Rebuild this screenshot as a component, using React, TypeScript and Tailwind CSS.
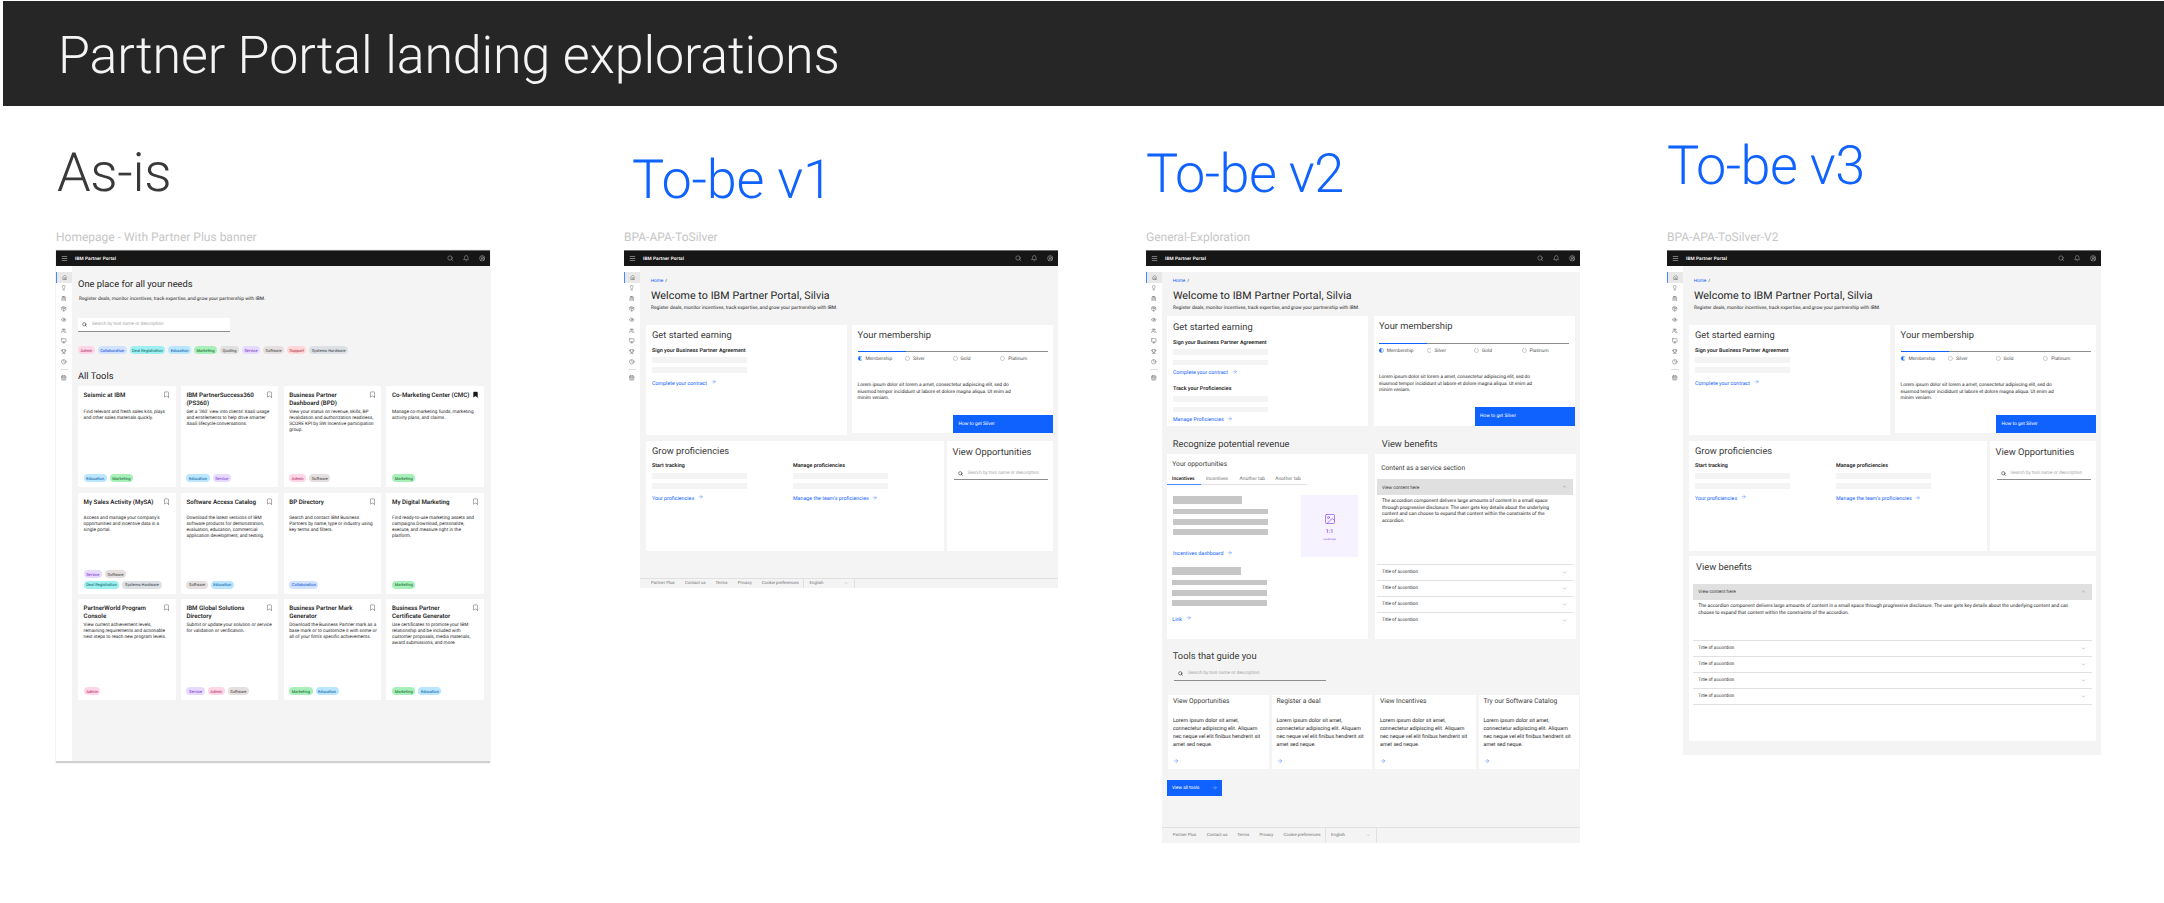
import type { ReactNode } from "react";
import {
  ArrowRight,
  Bell,
  Bookmark,
  CalendarDays,
  ChevronDown,
  ChevronUp,
  CircleUserRound,
  ClipboardList,
  Clock,
  Eye,
  Home,
  Image,
  Lightbulb,
  Menu,
  Monitor,
  Package,
  Search,
  Trophy,
  Users,
} from "lucide-react";

const tagStyles: Record<string, string> = {
  Admin: "bg-[#ffd6e8] text-[#9f1853]",
  Collaboration: "bg-[#d0e2ff] text-[#0043ce]",
  "Deal Registration": "bg-[#9ef0f0] text-[#005d5d]",
  Education: "bg-[#bae6ff] text-[#00539a]",
  Marketing: "bg-[#a7f0ba] text-[#0e6027]",
  Quoting: "bg-[#e0e0e0] text-[#393939]",
  Service: "bg-[#e8daff] text-[#6929c4]",
  Software: "bg-[#e5e0df] text-[#3c3838]",
  Support: "bg-[#ffd7d9] text-[#a2191f]",
  "Systems Hardware": "bg-[#dde1e6] text-[#343a3f]",
};

const tools = [
  { title: "Seismic at IBM", desc: "Find relevant and fresh sales kits, plays\nand other sales materials quickly.", tags: ["Education", "Marketing"] },
  { title: "IBM PartnerSuccess360\n(PS360)", desc: "Get a '360' view into clients' XaaS usage\nand entitlements to help drive smarter\nXaaS lifecycle conversations.", tags: ["Education", "Service"] },
  { title: "Business Partner\nDashboard (BPD)", desc: "View your status on revenue, skills, BP\nrevalidation and authorization readiness,\nSCORE KPI by SW Incentive participation\ngroup.", tags: ["Admin", "Software"] },
  { title: "Co-Marketing Center (CMC)", desc: "Manage co-marketing funds, marketing\nactivity plans, and claims.", tags: ["Marketing"], saved: true },
  { title: "My Sales Activity (MySA)", desc: "Access and manage your company's\nopportunities and incentive data in a\nsingle portal.", tags: ["Service", "Software", "Deal Registration", "Systems Hardware"] },
  { title: "Software Access Catalog", desc: "Download the latest versions of IBM\nsoftware products for demonstration,\nevaluation, education, commercial\napplication development, and testing.", tags: ["Software", "Education"] },
  { title: "BP Directory", desc: "Search and contact IBM Business\nPartners by name, type or industry using\nkey terms and filters.", tags: ["Collaboration"] },
  { title: "My Digital Marketing", desc: "Find ready-to-use marketing assets and\ncampaigns.Download, personalize,\nexecute, and measure right in the\nplatform.", tags: ["Marketing"] },
  { title: "PartnerWorld Program\nConsole", desc: "View current achievement levels,\nremaining requirements and actionable\nnext steps to reach new program levels.", tags: ["Admin"] },
  { title: "IBM Global Solutions\nDirectory", desc: "Submit or update your solution or service\nfor validation or verification.", tags: ["Service", "Admin", "Software"] },
  { title: "Business Partner Mark\nGenerator", desc: "Download the Business Partner mark as a\nbase mark or to customize it with some or\nall of your firm's specific achievements.", tags: ["Marketing", "Education"] },
  { title: "Business Partner\nCertificate Generator", desc: "Use certificates to promote your IBM\nrelationship and be included with\ncustomer proposals, media materials,\naward submissions, and more.", tags: ["Marketing", "Education"] },
];

const sideIcons = [Home, Lightbulb, ClipboardList, Package, Eye, Users, Monitor, Trophy, Clock];

function Tag({ name }: { name: string }) {
  return (
    <span className={`flex h-[8px] items-center rounded-full px-[2.6px] pt-[1.5px] text-[4.05px] whitespace-nowrap ${tagStyles[name]}`}>
      {name}
    </span>
  );
}

function TopBar() {
  return (
    <div className="flex h-[16px] items-center bg-[#161616] border-t border-[#6f6f6f] text-white">
      <div className="flex w-[16px] justify-center">
        <Menu size={7} strokeWidth={1.5} />
      </div>
      <span className="ml-[3px] pt-[2.8px] text-[4.7px] font-semibold tracking-[0.1px]">IBM Partner Portal</span>
      <div className="ml-auto flex">
        <div className="flex w-[16px] justify-center"><Search size={6.5} strokeWidth={1.2} /></div>
        <div className="flex w-[16px] justify-center"><Bell size={6.5} strokeWidth={1.2} /></div>
        <div className="flex w-[16px] justify-center"><CircleUserRound size={6.5} strokeWidth={1.2} /></div>
      </div>
    </div>
  );
}

function SideNav() {
  return (
    <div className="w-[16px] shrink-0 pt-[6px] bg-white text-[#393939]">
      {sideIcons.map((Icon, i) => (
        <div
          key={i}
          className={`flex h-[10.6px] items-center justify-center ${i === 0 ? "bg-[#e8e8e8] border-l border-[#4589ff]" : ""}`}
        >
          <Icon size={5.5} strokeWidth={1.6} />
        </div>
      ))}
      <div className="mx-[4px] mt-[1.5px] mb-[3px] h-px bg-[#e0e0e0]" />
      <div className="flex h-[10.6px] items-center justify-center">
        <CalendarDays size={5.5} strokeWidth={1.6} />
      </div>
    </div>
  );
}

function Frame({ children, gap = false }: { children: ReactNode; gap?: boolean }) {
  return (
    <div className="flex h-full flex-col">
      <TopBar />
      <div className="flex flex-1">
        <SideNav />
        <div className={`flex flex-1 flex-col bg-[#f4f4f4] ${gap ? "mt-[5.6px]" : ""}`}>{children}</div>
      </div>
    </div>
  );
}

function PageHead({ title, subTop }: { title: string; subTop: string }) {
  return (
    <div className={subTop}>
      <div className="flex h-[6px] items-center gap-[2px] pl-[10.7px] text-[4.7px] leading-[6px]">
        <span className="pt-[3px] text-[#0f62fe]">Home</span>
        <span className="pt-[3px] text-[#161616]">/</span>
      </div>
      <h2 className="mt-[5.5px] pl-[11px] text-[10.7px] leading-[14px] tracking-[0.05px] text-[#262626]">{title}</h2>
      <p className="mt-[3.1px] pl-[11px] text-[4.85px] leading-[6px] text-[#262626]">
        Register deals, monitor incentives, track expertise, and grow your partnership with IBM.
      </p>
    </div>
  );
}

function TextLink({ label, className = "" }: { label: string; className?: string }) {
  return (
    <div className={`flex h-[6px] items-center gap-[3.5px] text-[5.3px] leading-[6px] text-[#0f62fe] ${className}`}>
      <span className="pt-[3.5px]">{label}</span>
      <ArrowRight size={5.5} strokeWidth={1.5} />
    </div>
  );
}

function GreyBars() {
  return (
    <div className="flex w-[95px] flex-col gap-[4.6px]">
      <div className="h-[5.6px] bg-[#f4f4f4]" />
      <div className="h-[5.6px] bg-[#f4f4f4]" />
    </div>
  );
}

function Label({ children }: { children: ReactNode }) {
  return <div className="h-[6px] text-[5.4px] leading-[6px] font-semibold whitespace-nowrap text-[#262626]">{children}</div>;
}

function CardTitle({ children }: { children: ReactNode }) {
  return <h3 className="text-[9.35px] leading-[10px] whitespace-nowrap text-[#393939]">{children}</h3>;
}

function GetStarted({ track = false }: { track?: boolean }) {
  return (
    <div className={`h-[110px] w-[201px] bg-white pl-[6px] ${track ? "pt-[7px]" : "pt-[6.5px]"}`}>
      <CardTitle>Get started earning</CardTitle>
      <div className={track ? "mt-[7px]" : "mt-[6.5px]"}><Label>Sign your Business Partner Agreement</Label></div>
      <div className="mt-[3.3px]"><GreyBars /></div>
      <TextLink label="Complete your contract" className={track ? "mt-[3.5px]" : "mt-[5.9px]"} />
      {track && (
        <>
          <div className="mt-[11.7px]"><Label>Track your Proficiencies</Label></div>
          <div className="mt-[4px]"><GreyBars /></div>
          <TextLink label="Manage Proficiencies" className="mt-[3.2px]" />
        </>
      )}
    </div>
  );
}

function StepDot({ active }: { active: boolean }) {
  return (
    <svg viewBox="0 0 10 10" className="h-[4.8px] w-[4.8px] shrink-0">
      <circle cx="5" cy="5" r="4.4" fill="#fff" stroke={active ? "#0f62fe" : "#8d8d8d"} strokeWidth="0.9" />
      {active && <path d="M5 .6a4.4 4.4 0 0 0 0 8.8z" fill="#0f62fe" />}
    </svg>
  );
}

function Membership({ tall = false }: { tall?: boolean }) {
  return (
    <div className={`relative w-[201px] bg-white pt-[6px] ${tall ? "h-[110px]" : "h-[108px]"}`}>
      <div className="pl-[5.3px]"><CardTitle>Your membership</CardTitle></div>
      <div className={`mx-[5.3px] flex h-px bg-[#8d8d8d] ${tall ? "mt-[11px]" : "mt-[10px]"}`}>
        <div className="w-[48px] bg-[#0f62fe]" />
      </div>
      <div className="mx-[5.3px] mt-[2.7px] grid grid-cols-4 text-[4.8px] leading-[6px] text-[#525252]">
        {["Membership", "Silver", "Gold", "Platinum"].map((s, i) => (
          <div key={s} className="flex items-center gap-[3px]">
            <StepDot active={i === 0} />
            <span className="pt-[2.2px]">{s}</span>
          </div>
        ))}
      </div>
      <p className="mx-[5.3px] mt-[20px] text-[4.82px] leading-[6.67px] text-[#262626] whitespace-pre">
        {"Lorem ipsum dolor sit lorem a amet, consectetur adipiscing elit, sed do\neiusmod tempor incididunt ut labore et dolore magna aliqua. Ut enim ad\nminim veniam."}
      </p>
      <div className={`absolute right-0 bottom-0 w-[100px] bg-[#0f62fe] pl-[5.3px] pt-[6.7px] text-[4.8px] leading-[6px] text-white ${tall ? "h-[19px]" : "h-[18px]"}`}>
        How to get Silver
      </div>
    </div>
  );
}

function Proficiencies() {
  return (
    <div className="h-[110.5px] w-[298px] bg-white pl-[6px] pt-[6.5px]">
      <CardTitle>Grow proficiencies</CardTitle>
      <div className="mt-[6px] flex gap-[46px]">
        <div>
          <Label>Start tracking</Label>
          <div className="mt-[4px]"><GreyBars /></div>
          <TextLink label="Your proficiencies" className="mt-[5.2px]" />
        </div>
        <div>
          <Label>Manage proficiencies</Label>
          <div className="mt-[4px]"><GreyBars /></div>
          <TextLink label="Manage the team's proficiencies" className="mt-[5.7px]" />
        </div>
      </div>
    </div>
  );
}

function SearchField({ className }: { className: string }) {
  return (
    <div className={`flex items-center border-b border-[#8d8d8d] pl-[4px] text-[4.65px] text-[#a8a8a8] ${className}`}>
      <Search size={5} strokeWidth={2.4} className="mr-[5px] text-[#161616]" />
      <span className="pt-[2.4px] whitespace-nowrap">Search by tool name or description</span>
    </div>
  );
}

function ViewOpportunities() {
  return (
    <div className="h-[110.5px] w-[106px] bg-white pl-[5.5px] pr-[5.5px] pt-[7.5px]">
      <CardTitle>View Opportunities</CardTitle>
      <SearchField className="mt-[9px] ml-[1px] h-[13px]" />
    </div>
  );
}

function AccordionRows({ edge, last = true }: { edge: string; last?: boolean }) {
  return (
    <div className={edge}>
      {[0, 1, 2, 3].map((i) => (
        <div key={i} className="flex h-[16px] items-center justify-between border-t border-[#e0e0e0] pl-[5px] pr-[6px] text-[4.65px] text-[#393939]">
          <span className="pt-[2.2px]">Title of accordion</span>
          <ChevronDown size={5} strokeWidth={1.2} />
        </div>
      ))}
      {last && <div className="h-px bg-[#e0e0e0]" />}
    </div>
  );
}

function AccordionHead({ edge }: { edge: string }) {
  return (
    <div className={`flex h-[16px] items-center justify-between bg-[#e0e0e0] pl-[5px] pr-[6px] text-[4.7px] text-[#393939] ${edge}`}>
      <span className="pt-[2.2px]">View content here</span>
      <ChevronUp size={5} strokeWidth={1.2} />
    </div>
  );
}

function Footer({ pad }: { pad: string }) {
  const links = [
    ["Partner Plus", "w-[34px]"],
    ["Contact us", "w-[30.5px]"],
    ["Terms", "w-[22.3px]"],
    ["Privacy", "w-[24px]"],
    ["Cookie preferences", "w-[41.6px]"],
  ];
  return (
    <div className={`mt-auto flex border-t border-[#e0e0e0] text-[4.3px] text-[#6f6f6f] ${pad}`}>
      {links.map(([label, w]) => (
        <div key={label} className={`flex items-center whitespace-nowrap pt-[2px] ${w}`}>{label}</div>
      ))}
      <div className="flex w-[52px] items-center justify-between border-x border-[#e0e0e0] pl-[5px] pr-[6px]">
        <span className="pt-[2px]">English</span>
        <ChevronDown size={4.5} strokeWidth={1.2} />
      </div>
    </div>
  );
}

function ToolCard({ title, desc, tags, saved }: { title: string; desc: string; tags: string[]; saved?: boolean }) {
  return (
    <div className="flex h-[101px] flex-col bg-white px-[5.6px] pt-[6px] pb-[5.3px]">
      <div className="flex h-[17.5px] items-start justify-between">
        <h4 className="text-[6.2px] leading-[7.3px] font-semibold text-[#262626] whitespace-pre">{title}</h4>
        <Bookmark size={7} strokeWidth={1.2} className="-mt-[1px] -mr-[0.4px] shrink-0 text-[#161616]" fill={saved ? "#161616" : "none"} />
      </div>
      <p className="text-[4.7px] leading-[6px] text-[#262626] whitespace-pre">{desc}</p>
      <div className="mt-auto flex max-w-[80px] flex-wrap gap-x-[3px] gap-y-[2.6px]">
        {tags.map((t) => (
          <Tag key={t} name={t} />
        ))}
      </div>
    </div>
  );
}

function AsIs() {
  return (
    <div className="absolute left-[56px] top-[250px] h-[513px] w-[434px] border-b-2 border-[#d0d0d0] shadow-[0_0_0_0.5px_#e8e8e8]">
      <Frame>
        <div className="px-[6px] pt-[13px]">
          <h2 className="text-[9.3px] leading-[12px] text-[#262626]">One place for all your needs</h2>
          <p className="mt-[6px] pl-px text-[4.85px] leading-[6px] text-[#262626]">
            Register deals, monitor incentives, track expertise, and grow your partnership with IBM.
          </p>
          <SearchField className="mt-[15.2px] h-[14px] w-[152px] bg-white" />
          <div className="mt-[14px] flex gap-[2.7px]">
            {Object.keys(tagStyles).map((t) => (
              <Tag key={t} name={t} />
            ))}
          </div>
          <h2 className="mt-[17.3px] text-[9.3px] leading-[12px] text-[#262626]">All Tools</h2>
          <div className="mt-[2.8px] grid grid-cols-4 gap-x-[5.3px] gap-y-[5.6px]">
            {tools.map((t) => (
              <ToolCard key={t.title} {...t} />
            ))}
          </div>
        </div>
      </Frame>
    </div>
  );
}

function Skeleton() {
  return (
    <>
      <div className="h-[8px] w-[69px] bg-[#c6c6c6]" />
      <div className="mt-[5px] flex w-[95px] flex-col gap-[4.5px]">
        <div className="h-[5.6px] bg-[#c6c6c6]" />
        <div className="h-[5.6px] bg-[#c6c6c6]" />
        <div className="h-[5.6px] bg-[#c6c6c6]" />
      </div>
    </>
  );
}

function ToBeOne() {
  return (
    <div className="absolute left-[624px] top-[250px] h-[338px] w-[434px]">
      <Frame>
        <PageHead title="Welcome to IBM Partner Portal, Silvia" subTop="pt-[11px]" />
        <div className="mt-[13.4px] ml-[6px] flex items-start gap-[5.3px]">
          <GetStarted />
          <Membership />
        </div>
        <div className="mt-[5.7px] ml-[6px] flex gap-[3px]">
          <Proficiencies />
          <ViewOpportunities />
        </div>
        <Footer pad="pl-[11px] h-[10.5px]" />
      </Frame>
    </div>
  );
}

function ToBeThree() {
  return (
    <div className="absolute left-[1667px] top-[250px] h-[505px] w-[434px]">
      <Frame>
        <PageHead title="Welcome to IBM Partner Portal, Silvia" subTop="pt-[11px]" />
        <div className="mt-[13.4px] ml-[6px] flex items-start gap-[5.3px]">
          <GetStarted />
          <Membership />
        </div>
        <div className="mt-[5.7px] ml-[6px] flex gap-[3px]">
          <Proficiencies />
          <ViewOpportunities />
        </div>
        <div className="mt-[5px] ml-[6px] h-[185px] w-[407.3px] bg-white pt-[7.3px]">
          <div className="pl-[7px]"><CardTitle>View benefits</CardTitle></div>
          <AccordionHead edge="mt-[10.3px] ml-[4.3px] mr-[4px]" />
          <p className="mx-[9.3px] mt-[4.2px] text-[4.85px] leading-[6.67px] text-[#262626] whitespace-pre">
            {"The accordion component delivers large amounts of content in a small space through progressive disclosure. The user gets key details about the underlying content and can\nchoose to expand that content within the constraints of the accordion."}
          </p>
          <AccordionRows edge="mt-[22.5px] ml-[4.3px] mr-[4px]" />
        </div>
      </Frame>
    </div>
  );
}

function ToBeTwo() {
  const small = "Lorem ipsum dolor sit amet,\nconnectetur adipiscing elit. Aliquam\nnec neque vel elit finibus hendrerit sit\namet sed neque.";
  return (
    <div className="absolute left-[1146px] top-[250px] h-[593px] w-[434px]">
      <Frame gap>
        <PageHead title="Welcome to IBM Partner Portal, Silvia" subTop="pt-[5.5px]" />
        <div className="mt-[4.4px] ml-[5px] flex gap-[5.7px]">
          <GetStarted track />
          <Membership tall />
        </div>
        <div className="mt-[12.7px] flex text-[9.35px] leading-[12px] text-[#393939]">
          <div className="w-[219.7px] pl-[10.7px]">Recognize potential revenue</div>
          <div>View benefits</div>
        </div>
        <div className="mt-[3.6px] ml-[5px] flex gap-[6.5px]">
          <div className="h-[185px] w-[201px] bg-white pt-[6px]">
            <div className="pl-[5.3px] text-[6.7px] leading-[8px] text-[#393939]">Your opportunities</div>
            <div className="mt-[6px] flex text-[4.9px] text-[#6f6f6f]">
              {[
                ["Incentives", "w-[34px] border-[#4589ff] text-[#161616] font-semibold"],
                ["Incentives", "w-[33.6px] border-[#e0e0e0]"],
                ["Another tab", "w-[35.6px] border-[#e0e0e0]"],
                ["Another tab", "w-[36.6px] border-[#e0e0e0]"],
              ].map(([t, c], i) => (
                <div key={i} className={`h-[11px] border-b pl-[5px] leading-[11px] whitespace-nowrap ${c}`}>{t}</div>
              ))}
            </div>
            <div className="mt-[10.5px] flex pl-[6px]">
              <div className="w-[128px]">
                <Skeleton />
                <TextLink label="Incentives dashboard" className="mt-[14.8px]" />
              </div>
              <div className="-mt-[1px] flex h-[62px] w-[57px] flex-col items-center bg-[#f6f2ff] pt-[18px] text-[#8a3ffc]">
                <Image size={12} strokeWidth={1.3} />
                <div className="mt-[5px] text-[5.3px] leading-[5px] font-medium">1:1</div>
                <div className="text-[2.6px] leading-[9px]">Landscape</div>
              </div>
            </div>
            <div className="mt-[10px] pl-[5.3px]">
              <Skeleton />
              <TextLink label="Link" className="mt-[9.2px]" />
            </div>
          </div>
          <div className="h-[185px] w-[201px] bg-white px-[2.4px] pt-[10px]">
            <div className="pl-[4.3px] text-[6.7px] leading-[8px] text-[#393939]">Content as a service section</div>
            <AccordionHead edge="mt-[6.6px] mx-0" />
            <p className="mt-[4.2px] pl-[5px] text-[4.85px] leading-[6.67px] text-[#262626] whitespace-pre">
              {"The accordion component delivers large amounts of content in a small space\nthrough progressive disclosure. The user gets key details about the underlying\ncontent and can choose to expand that content within the constraints of the\naccordion."}
            </p>
            <AccordionRows edge="mt-[38.1px]" last={false} />
          </div>
        </div>
        <div className="mt-[11.4px] pl-[10.7px] text-[9.35px] leading-[12px] text-[#393939]">Tools that guide you</div>
        <SearchField className="mt-[4.9px] ml-[12px] h-[13px] w-[152px]" />
        <div className="mt-[14.4px] ml-[6px] flex gap-[3px]">
          {["View Opportunities", "Register a deal", "View Incentives", "Try our Software Catalog"].map((t) => (
            <div key={t} className="h-[74px] w-[100.5px] bg-white px-[5px] pt-[2px]">
              <div className="text-[6.7px] leading-[8px] whitespace-nowrap text-[#393939]">{t}</div>
              <p className="mt-[11.5px] text-[5.3px] leading-[8px] text-[#262626] whitespace-pre">{small}</p>
              <ArrowRight size={6} strokeWidth={1.5} className="mt-[9px] text-[#0f62fe]" />
            </div>
          ))}
        </div>
        <div className="mt-[11px] ml-[5px] flex h-[16px] w-[55px] items-center justify-between bg-[#0f62fe] px-[5px] text-[4.65px] text-white">
          <span className="pt-[2.2px]">View all tools</span>
          <ArrowRight size={5.5} strokeWidth={1.2} />
        </div>
        <Footer pad="pl-[10.7px] h-[16px]" />
      </Frame>
    </div>
  );
}

export default function App() {
  return (
    <div className="relative h-[903px] w-[2164px] overflow-hidden bg-white font-['Roboto',sans-serif] [text-rendering:geometricPrecision]">
      <div className="mt-px ml-[3px] flex h-[105px] items-center bg-[#262626] pl-[55px]">
        <h1 className="pt-[5px] text-[52px] leading-none font-light tracking-[-0.15px] text-[#f4f4f4]">Partner Portal landing explorations</h1>
      </div>

      <p className="absolute left-[57px] top-[144px] text-[54px] leading-[60px] font-light tracking-[-0.4px] text-[#393939]">As-is</p>
      <p className="absolute left-[632px] top-[151px] text-[54px] leading-[60px] font-light tracking-[-0.2px] text-[#0f62fe]">To-be v1</p>
      <p className="absolute left-[1146px] top-[145px] text-[54px] leading-[60px] font-light tracking-[-0.6px] text-[#0f62fe]">To-be v2</p>
      <p className="absolute left-[1667px] top-[137px] text-[54px] leading-[60px] font-light tracking-[-0.6px] text-[#0f62fe]">To-be v3</p>

      <p className="absolute left-[56px] top-[229px] text-[12px] leading-[16px] text-[#c6c6c6]">Homepage - With Partner Plus banner</p>
      <p className="absolute left-[624px] top-[229px] text-[12px] leading-[16px] text-[#c6c6c6]">BPA-APA-ToSilver</p>
      <p className="absolute left-[1146px] top-[229px] text-[12px] leading-[16px] text-[#c6c6c6]">General-Exploration</p>
      <p className="absolute left-[1667px] top-[229px] text-[12px] leading-[16px] text-[#c6c6c6]">BPA-APA-ToSilver-V2</p>

      <AsIs />
      <ToBeOne />
      <ToBeTwo />
      <ToBeThree />
    </div>
  );
}
